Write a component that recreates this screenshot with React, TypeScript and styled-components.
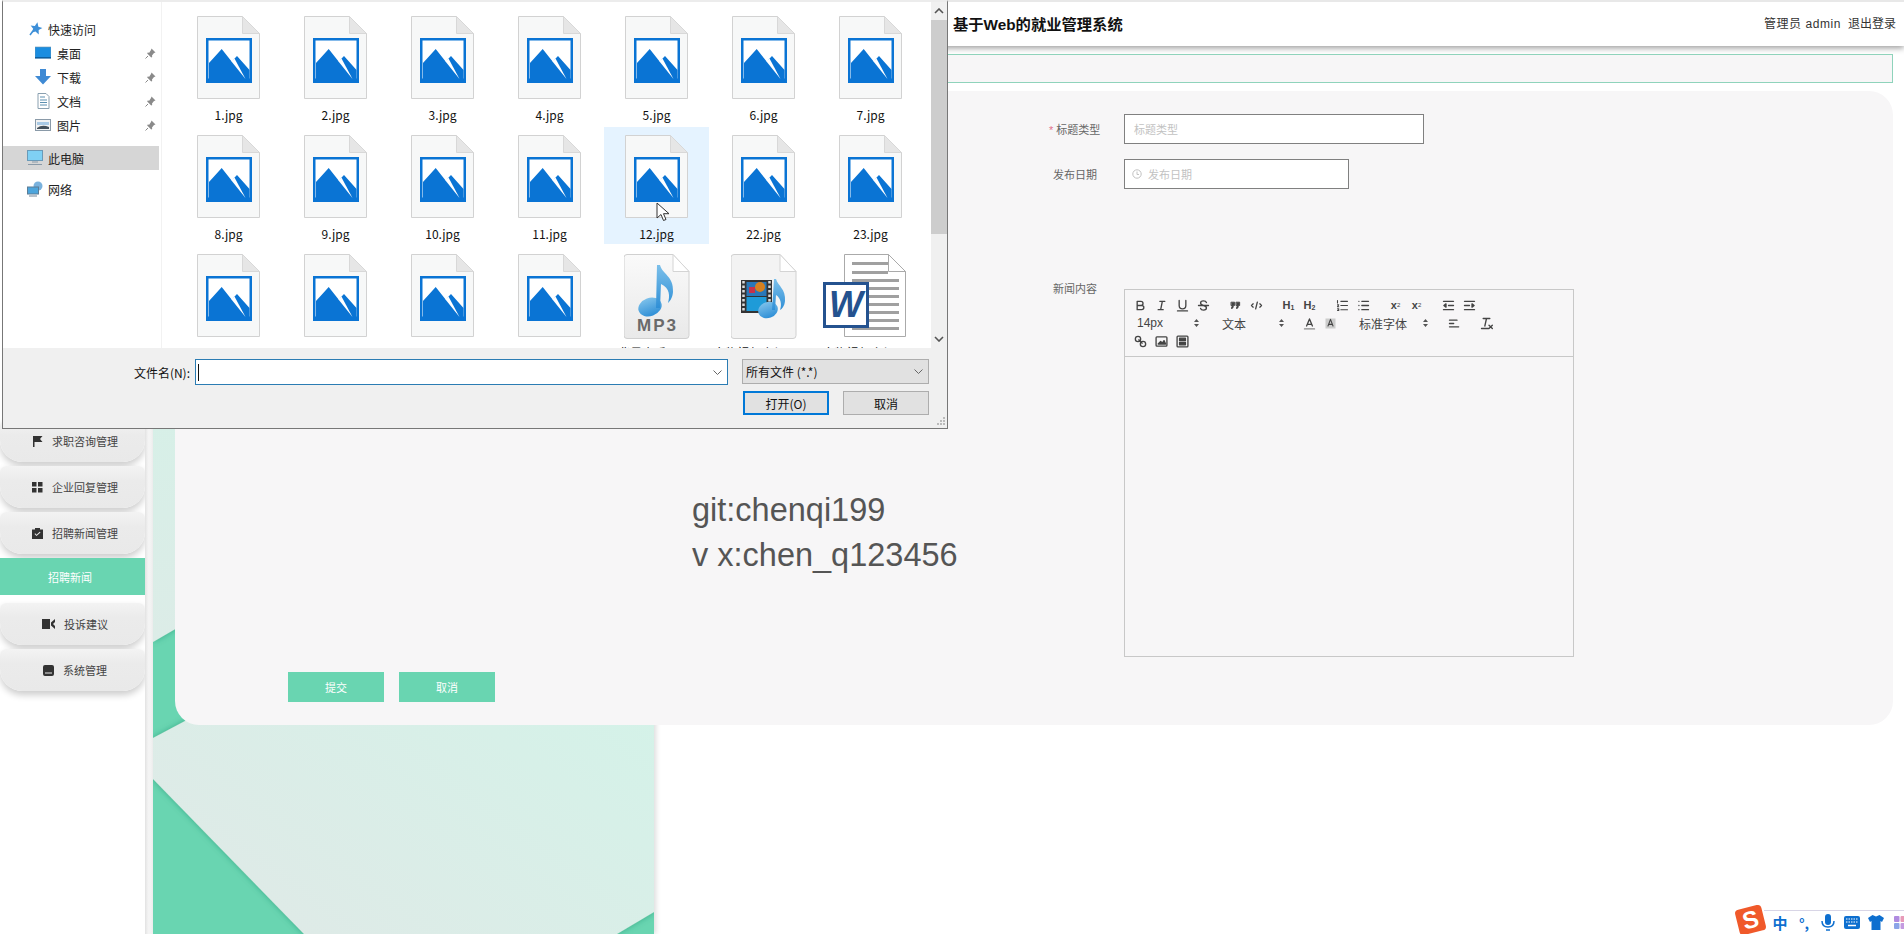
import React from "react";
import styled, { createGlobalStyle } from "styled-components";

const Global = createGlobalStyle`
  html, body { margin: 0; padding: 0; background: #fff; }
  body { width: 1904px; height: 934px; overflow: hidden; font-family: "Liberation Sans", "Noto Sans CJK SC", sans-serif; color: #333; }
  * { box-sizing: border-box; }
`;

const Page = styled.div`
  position: relative;
  display: flex;
  width: 1904px;
  height: 934px;
  overflow: hidden;
  background: #fff;
`;

/* ---------- sidebar ---------- */
const Sidebar = styled.nav`
  width: 145px;
  flex: none;
  display: flex;
  flex-direction: column;
  padding-top: 420px;
  background: #fff;
`;
const MenuItem = styled.div`
  height: 42px;
  margin-bottom: 4px;
  display: flex;
  align-items: center;
  justify-content: center;
  gap: 9px;
  padding-left: 5px;
  font-size: 11px;
  color: #444;
  background: linear-gradient(#f3f3f3, #ebebeb 35%, #e9e9e9);
  border-radius: 6px 6px 22px 22px;
  box-shadow: 0 4px 7px rgba(0, 0, 0, 0.2);
`;
const SubItem = styled.div`
  height: 37px;
  margin-bottom: 8px;
  display: flex;
  align-items: center;
  justify-content: center;
  padding-right: 5px;
  font-size: 11px;
  color: #fff;
  background: #69d5b1;
`;
const Gutter = styled.div`
  width: 8px;
  flex: none;
  background: linear-gradient(to right, #e2e2e2, #f4f4f4 40%, #f3f3f3);
`;

/* ---------- main ---------- */
const Main = styled.main`
  position: relative;
  flex: 1;
  display: flex;
  flex-direction: column;
  min-width: 0;
`;
const Art = styled.div`
  position: absolute;
  left: 0;
  top: 0;
  width: 501px;
  height: 934px;
  box-shadow: 2px 0 5px rgba(0, 0, 0, 0.14);
`;
const Header = styled.header`
  position: relative;
  height: 46px;
  flex: none;
  display: flex;
  align-items: center;
  justify-content: space-between;
  padding: 0 8px 3px 800px;
  background: #fff;
  border-top: 2px solid #e8e8e8;
  box-shadow: 0 2px 6px rgba(0, 0, 0, 0.4);
`;
const Title = styled.h1`
  margin: 0;
  font-size: 15.3px;
  font-weight: 700;
  color: #111;
  font-family: "Liberation Sans", "Noto Sans CJK SC", sans-serif;
`;
const UserBox = styled.div`
  display: flex;
  gap: 7px;
  font-size: 12px;
  color: #333;
`;
const UserName = styled.span`
  letter-spacing: 0.55px;
`;
const Crumb = styled.div`
  position: relative;
  height: 29px;
  flex: none;
  margin: 8px 11px 0 22px;
  background: #f7f6f7;
  border: 1px solid #8fd3bb;
`;
const Panel = styled.section`
  position: relative;
  height: 634px;
  flex: none;
  margin: 8px 11px 0 22px;
  display: flex;
  background: #f7f6f7;
  border-radius: 24px;
`;
const LeftCol = styled.div`
  width: 874px;
  flex: none;
  padding: 397px 0 0 113px;
`;
const Note = styled.div`
  height: 90px;
  margin-left: 404px;
  font-family: "Liberation Sans", sans-serif;
  font-size: 32.5px;
  line-height: 45px;
  color: #555;
  white-space: nowrap;
`;
const Actions = styled.div`
  display: flex;
  gap: 15px;
  margin-top: 94px;
`;
const Action = styled.button`
  width: 96px;
  height: 30px;
  border: 0;
  padding: 0;
  background: #69d5b1;
  color: #fff;
  font-size: 11px;
  font-family: inherit;
`;
const RightCol = styled.div`
  flex: 1;
  display: flex;
  flex-direction: column;
  padding-top: 23px;
`;
const Field = styled.div<{ $mt?: number }>`
  display: flex;
  align-items: center;
  margin-top: ${(p) => p.$mt ?? 0}px;
`;
const Label = styled.label<{ $indent?: number }>`
  width: 75px;
  flex: none;
  padding-left: ${(p) => p.$indent ?? 0}px;
  font-size: 11px;
  color: #666;
`;
const Star = styled.span`
  color: #e2738a;
  margin-right: 3px;
`;
const Input = styled.div<{ $w: number }>`
  width: ${(p) => p.$w}px;
  height: 30px;
  display: flex;
  align-items: center;
  gap: 6px;
  padding: 0 9px;
  background: #fff;
  border: 1px solid #808080;
  font-size: 11px;
  color: #c2c2c2;
`;
const DateInput = styled(Input)`
  padding-left: 7px;
`;
const EditorRow = styled.div`
  display: flex;
  align-items: flex-start;
  margin-top: 100px;
`;
const EditorLabel = styled(Label)`
  margin-top: -9px;
  line-height: 18px;
`;
const Editor = styled.div`
  width: 450px;
  height: 368px;
  border: 1px solid #c8c8c8;
  background: #f7f6f7;
`;
const Toolbar = styled.div`
  height: 67px;
  padding: 6px 0 0 5px;
  border-bottom: 1px solid #c8c8c8;
  display: flex;
  flex-direction: column;
`;
const ToolRow = styled.div`
  height: 18px;
  display: flex;
  align-items: center;
`;
const Tool = styled.span<{ $gap?: number }>`
  width: 21px;
  height: 18px;
  flex: none;
  display: flex;
  align-items: center;
  justify-content: center;
  margin-right: ${(p) => p.$gap ?? 0}px;
  font-size: 11px;
  font-weight: 700;
  color: #444;
  svg { width: 15px; height: 15px; fill: none; stroke: #444; stroke-width: 1.6; stroke-linecap: round; stroke-linejoin: round; }
  small { font-size: 7px; font-weight: 700; position: relative; top: 2px; }
  sup { font-size: 6px; line-height: 0; font-weight: 400; }
  sub { font-size: 6px; line-height: 0; font-weight: 400; }
`;
const Select = styled.span<{ $w: number; $gap?: number }>`
  width: ${(p) => p.$w}px;
  height: 18px;
  flex: none;
  margin-right: ${(p) => p.$gap ?? 11}px;
  padding: 0 5px 0 7px;
  display: flex;
  align-items: center;
  justify-content: space-between;
  font-size: 12px;
  color: #444;
`;
const Arrows = styled.svg`
  width: 5px;
  height: 8px;
  fill: #555;
`;

/* ---------- file dialog ---------- */
const Dialog = styled.div`
  position: absolute;
  left: 2px;
  top: 0;
  width: 946px;
  height: 429px;
  display: flex;
  flex-direction: column;
  background: #fff;
  border-left: 1px solid #777;
  border-right: 1px solid #777;
  border-bottom: 1px solid #777;
  border-top: 2px solid #ececec;
  font-family: "Noto Sans CJK SC", "Noto Sans", sans-serif;
  color: #111;
  z-index: 10;
`;
const DialogBody = styled.div`
  height: 346px;
  flex: none;
  display: flex;
  overflow: hidden;
`;
const NavPane = styled.div`
  width: 159px;
  flex: none;
  padding-top: 15px;
  border-right: 1px solid #f2f2f2;
`;
const NavItem = styled.div<{ $level?: number; $active?: boolean; $mt?: number }>`
  height: 24px;
  margin: ${(p) => p.$mt ?? 0}px 2px 0 0;
  padding-left: ${(p) => (p.$level ? 32 : 24)}px;
  display: flex;
  align-items: center;
  gap: ${(p) => (p.$level ? 6 : 5)}px;
  font-size: 12px;
  color: #222;
  background: ${(p) => (p.$active ? "#d6d6d6" : "transparent")};
  svg { flex: none; }
`;
const Pin = styled.svg`
  width: 11px;
  height: 11px;
  margin-left: auto;
  margin-right: 3px;
`;
const FileGrid = styled.div`
  flex: 1;
  padding: 6px 0 0 14px;
  display: grid;
  grid-template-columns: repeat(7, 105px);
  grid-auto-rows: 117px;
  gap: 2px;
  align-content: start;
`;
const Tile = styled.div<{ $selected?: boolean }>`
  display: flex;
  flex-direction: column;
  align-items: center;
  padding-top: 8px;
  background: ${(p) => (p.$selected ? "#e5f3ff" : "transparent")};
`;
const TileIcon = styled.div<{ $shift?: number }>`
  height: 84px;
  flex: none;
  display: flex;
  align-items: flex-start;
  justify-content: center;
  margin-right: ${(p) => p.$shift ?? 0}px;
`;
const TileName = styled.div`
  margin-top: 7px;
  font-size: 12px;
  line-height: 16px;
  color: #111;
  white-space: nowrap;
`;
const Scrollbar = styled.div`
  width: 16px;
  flex: none;
  display: flex;
  flex-direction: column;
  align-items: center;
  background: #f0f0f0;
`;
const ScrollBtn = styled.svg<{ $mt?: number }>`
  width: 10px;
  height: 6px;
  flex: none;
  margin-top: ${(p) => p.$mt ?? 0}px;
  fill: none;
  stroke: #555;
  stroke-width: 1.6;
`;
const Thumb = styled.div`
  width: 16px;
  height: 214px;
  flex: none;
  margin-top: 6px;
  background: #cdcdcd;
`;
const DialogFoot = styled.div`
  flex: 1;
  display: grid;
  grid-template-columns: 192px 533px 14px 187px;
  grid-template-rows: 26px 24px;
  row-gap: 6px;
  align-content: start;
  padding-top: 11px;
  background: #f0f0f0;
  font-size: 12px;
`;
const FootLabel = styled.label`
  display: flex;
  align-items: center;
  justify-content: flex-end;
  padding-right: 5px;
  color: #111;
`;
const NameInput = styled.div`
  display: flex;
  align-items: center;
  justify-content: space-between;
  padding: 0 5px 0 2px;
  background: #fff;
  border: 1px solid #2b7cb3;
`;
const Caret = styled.span`
  width: 1px;
  height: 17px;
  background: #111;
`;
const Chevron = styled.svg`
  width: 9px;
  height: 5px;
  fill: none;
  stroke: #666;
  stroke-width: 1;
`;
const TypeSelect = styled.div`
  grid-column: 4;
  display: flex;
  align-items: center;
  justify-content: space-between;
  padding: 0 5px 0 3px;
  height: 25px;
  background: #e1e1e1;
  border: 1px solid #adadad;
`;
const FootButtons = styled.div`
  grid-column: 4;
  display: flex;
  justify-content: space-between;
  padding-left: 1px;
`;
const WinBtn = styled.button<{ $primary?: boolean }>`
  width: 86px;
  height: 24px;
  padding: 0;
  font-family: inherit;
  font-size: 12px;
  color: #111;
  background: #e1e1e1;
  border: ${(p) => (p.$primary ? "2px solid #0078d7" : "1px solid #adadad")};
`;
const Grip = styled.svg`
  position: absolute;
  right: 2px;
  bottom: 2px;
  width: 9px;
  height: 9px;
  fill: #bbb;
`;
const Cursor = styled.svg`
  position: absolute;
  left: 653px;
  top: 200px;
  width: 14px;
  height: 20px;
`;

/* ---------- ime tray ---------- */
const Tray = styled.div`
  position: absolute;
  right: 0;
  bottom: 0;
  width: 140px;
  height: 24px;
  display: grid;
  grid-template-columns: repeat(6, 24px);
  justify-items: center;
  align-items: center;
  padding-left: 4px;
  border-top: 1px solid #d8d5e6;
  background: #fff;
  z-index: 20;
  color: #0e6fcf;
  font-family: "Noto Sans CJK SC", sans-serif;
  font-size: 15px;
  font-weight: 700;
`;
const Sogou = styled.div`
  position: absolute;
  right: 140px;
  bottom: 1px;
  width: 27px;
  height: 26px;
  display: flex;
  align-items: center;
  justify-content: center;
  background: #f0592a;
  border-radius: 4px;
  transform: rotate(-14deg);
  color: #fff;
  font: 700 24px "Liberation Sans", sans-serif;
  z-index: 21;
`;
const Punct = styled.span`
  font-size: 14px;
  line-height: 1;
  white-space: nowrap;
`;

/* ---------- drawings ---------- */
const ImageFile = () => (
  <svg width="64" height="84" viewBox="0 0 64 84">
    <path d="M.5.5h45l17 17v65H.5z" fill="#f7f8f8" stroke="#d2d2d2" />
    <path d="M45.5.5v17h17z" fill="#e6e6e6" stroke="#d8d8d8" />
    <rect x="9" y="22" width="46" height="45" fill="#0a74d4" />
    <rect x="11.5" y="24.5" width="41" height="38" fill="#fff" />
    <path d="M12 47L24.7 33 35 46 37.500 42.500 40 40 52.500 54V64H12z" fill="#0a74d4" />
    <path d="M34.500 45.500L37.500 42.500 48.500 63z" fill="#fff" />
  </svg>
);
const Mp3File = () => (
  <svg width="66" height="86" viewBox="0 0 66 86">
    <defs>
      <linearGradient id="mp3p" x1="0" y1="0" x2="0" y2="1">
        <stop offset="0" stopColor="#fafafa" />
        <stop offset="1" stopColor="#e9e9e9" />
      </linearGradient>
      <linearGradient id="note" x1="0" y1="0" x2="0" y2="1">
        <stop offset="0" stopColor="#7cc0ea" />
        <stop offset="1" stopColor="#2f8fd6" />
      </linearGradient>
    </defs>
    <path d="M3 .5h46l16 17v64q0 3-3 3H3q-3 0-3-3V3.500q0-3 3-3z" fill="url(#mp3p)" stroke="#d0d0d0" />
    <path d="M49 .5v17h16z" fill="#fff" stroke="#d4d4d4" />
    <ellipse cx="26" cy="53" rx="12" ry="9" fill="url(#note)" transform="rotate(-20 26 53)" />
    <path d="M33 11h3c2 9 14 11 13 27-.5 6-3 9-5 11 2-7 2-15-7-19l-1 24h-4z" fill="url(#note)" />
    <text x="33.500" y="77" textAnchor="middle" fontFamily="Liberation Sans" fontWeight="700" fontSize="17" letterSpacing="2" fill="#6a6a6a">MP3</text>
  </svg>
);
const VideoFile = () => (
  <svg width="66" height="86" viewBox="0 0 66 86">
    <defs>
      <linearGradient id="vidn" x1="0" y1="0" x2="0" y2="1">
        <stop offset="0" stopColor="#7cc0ea" />
        <stop offset="1" stopColor="#2f8fd6" />
      </linearGradient>
    </defs>
    <path d="M3 .5h46l16 17v64q0 3-3 3H3q-3 0-3-3V3.500q0-3 3-3z" fill="#f3f3f3" stroke="#d0d0d0" />
    <path d="M49 .5v17h16z" fill="#fff" stroke="#d4d4d4" />
    <rect x="10" y="26" width="31" height="33" fill="#333" />
    <path d="M12.500 27v31M38.500 27v31" stroke="#ddd" strokeWidth="2.500" strokeDasharray="2.500 2" />
    <rect x="15.500" y="28" width="20" height="14" fill="#2a78b8" />
    <rect x="15.500" y="43" width="20" height="14" fill="#1f9bd8" />
    <circle cx="29" cy="33" r="5" fill="#d8811f" />
    <rect x="18" y="33" width="6" height="6" fill="#c8324a" />
    <ellipse cx="37" cy="56" rx="10" ry="8" fill="url(#vidn)" transform="rotate(-20 37 56)" />
    <path d="M43 25h2c2 7 10 10 9 22-.5 5-3 8-5 9 2-5 1-12-4-15l-1 15h-3z" fill="url(#vidn)" />
  </svg>
);
const WordFile = () => (
  <svg width="84" height="84" viewBox="0 0 84 84">
    <path d="M21.500.5h44l17 17v65h-61z" fill="#fff" stroke="#aaa" />
    <path d="M65.500.5v17h17z" fill="#fff" stroke="#aaa" />
    {[8, 17].map((y) => <rect key={y} x="29" y={y} width="36" height="3" fill="#a0a0a0" />)}
    {[25, 33, 41, 49, 57, 65, 73].map((y) => <rect key={y} x="29" y={y} width="47" height="3" fill="#a0a0a0" />)}
    <rect x="1.500" y="29.500" width="43" height="43" fill="#fff" stroke="#24528f" strokeWidth="3" />
    <text x="23" y="63" textAnchor="middle" fontFamily="Liberation Sans" fontStyle="italic" fontWeight="700" fontSize="36" fill="#24528f">W</text>
  </svg>
);

const Svg16 = ({ children }: { children: React.ReactNode }) => (
  <svg width="16" height="16" viewBox="0 0 16 16">{children}</svg>
);
const QuickIcon = () => (
  <Svg16><path d="M9 1l1.800 4 4.200.4-3.200 2.800 1 4.300L9 10.300 5.200 12.500l1-4.300L3 5.400l4.200-.4z" fill="#3d8fd8" transform="rotate(12 8 8)" /><path d="M3 14l3-4" stroke="#3d8fd8" strokeWidth="1.500" /></Svg16>
);
const DesktopIcon = () => (
  <Svg16><rect x="0" y="2" width="16" height="11" fill="#1a8de0" stroke="#6f95b0" strokeWidth=".6" /><rect x="0" y="12" width="16" height="1.500" fill="#0c5e9f" /></Svg16>
);
const DownIcon = () => (
  <Svg16><path d="M5 0h6v7h5l-8 8.500L0 7h5z" fill="#3f8ad4" /></Svg16>
);
const DocIcon = () => (
  <Svg16><path d="M3 .5h8l3 3v12H3z" fill="#fff" stroke="#8aa0b0" /><path d="M5 4h5M5 7h7M5 9.500h7M5 12h7" stroke="#5c8fb0" /></Svg16>
);
const PicIcon = () => (
  <Svg16><rect x=".5" y="2.500" width="15" height="11" fill="#f2f2f2" stroke="#8a9aa8" /><path d="M2 5h12v3H2z" fill="#a9c9e4" /><path d="M2 11q5-4 12-1v2H2z" fill="#44505a" /></Svg16>
);
const PcIcon = () => (
  <Svg16><rect x=".5" y=".5" width="15" height="10" fill="#7fd0f4" stroke="#6a9ab8" /><path d="M5 12h6M1 14.500h14" stroke="#8a9aa8" strokeWidth="1.200" /></Svg16>
);
const NetIcon = () => (
  <Svg16><circle cx="11" cy="5" r="4.500" fill="#7ab2dd" /><rect x=".5" y="6" width="11" height="7" fill="#4da5dc" stroke="#5c7d96" /><path d="M2 15h8" stroke="#8a9aa8" strokeWidth="1.200" /></Svg16>
);
const PinIcon = () => (
  <Pin viewBox="0 0 11 11"><path d="M6.500 0.500l4 4-1.500.5-2 2.500.2 1.500-1 .5-4-4 .5-1 1.500.2L6 2z" fill="#8a8a8a" /><path d="M3 8L.5 10.500" stroke="#8a8a8a" /></Pin>
);

const IconSvg = styled.svg<{ $w?: number; $h?: number }>`
  width: ${(p) => p.$w ?? 11}px;
  height: ${(p) => p.$h ?? 11}px;
  flex: none;
  fill: #333;
`;
const FlagIcon = () => <IconSvg viewBox="0 0 11 11"><path d="M1 0h9.500L8 3l2.500 3H2.500v5H1z" /></IconSvg>;
const GridIcon = () => <IconSvg viewBox="0 0 11 11"><path d="M0 0h4.500v4.500H0zM6 0h4.500v4.500H6zM0 6h4.500v4.500H0zM6 6h4.500v4.500H6z" /></IconSvg>;
const ClipIcon = () => <IconSvg viewBox="0 0 11 11"><path fillRule="evenodd" d="M0 1.500h3V0h5v1.500h3V11H0zM2.500 6l2 2L8.500 4.500l-.7-.7L4.500 6.800 3.200 5.300z" /></IconSvg>;
const CamIcon = () => <IconSvg $w={13} $h={10} viewBox="0 0 13 10"><path d="M0 0h8v10H0zM9 3.500L13 0v3l-2 2 2 2v3L9 6.500z" /></IconSvg>;
const BoxIcon = () => <IconSvg viewBox="0 0 11 11"><path fillRule="evenodd" d="M2 0h7q2 0 2 2v7q0 2-2 2H2q-2 0-2-2V2q0-2 2-2zM2 7.500v1h7v-1z" /></IconSvg>;

const ClockIcon = () => (
  <svg width="10" height="10" viewBox="0 0 10 10" fill="none" stroke="#c2c2c2"><circle cx="5" cy="5" r="4.200" /><path d="M5 2.500V5.500h2" /></svg>
);
const UpDown = () => <Arrows viewBox="0 0 5 8"><path d="M2.500 0L5 3H0zM2.500 8L0 5h5z" /></Arrows>;

const files: { name: string; kind?: "mp3" | "video" | "word"; selected?: boolean }[] = [
  { name: "1.jpg" }, { name: "2.jpg" }, { name: "3.jpg" }, { name: "4.jpg" }, { name: "5.jpg" }, { name: "6.jpg" }, { name: "7.jpg" },
  { name: "8.jpg" }, { name: "9.jpg" }, { name: "10.jpg" }, { name: "11.jpg" }, { name: "12.jpg", selected: true }, { name: "22.jpg" }, { name: "23.jpg" },
  { name: "24.jpg" }, { name: "25.jpg" }, { name: "26.jpg" }, { name: "27.jpg" },
  { name: "背景音乐.mp3", kind: "mp3" }, { name: "人物视频介绍.mp4", kind: "video" }, { name: "人物视频介绍.doc", kind: "word" },
];

const App = () => (
  <Page>
    <Global />
    <Sidebar>
      <MenuItem><FlagIcon />求职咨询管理</MenuItem>
      <MenuItem><GridIcon />企业回复管理</MenuItem>
      <MenuItem><ClipIcon />招聘新闻管理</MenuItem>
      <SubItem>招聘新闻</SubItem>
      <MenuItem><CamIcon />投诉建议</MenuItem>
      <MenuItem><BoxIcon />系统管理</MenuItem>
    </Sidebar>
    <Gutter />
    <Main>
      <Art>
        <svg width="501" height="934" viewBox="0 0 501 934">
          <defs>
            <linearGradient id="up" x1="0" y1="0" x2="0" y2="1">
              <stop offset="0" stopColor="#cdf6e8" />
              <stop offset="1" stopColor="#dcece7" />
            </linearGradient>
            <linearGradient id="low" x1="1" y1="0" x2="0.2" y2="1">
              <stop offset="0" stopColor="#cff6e9" />
              <stop offset="1" stopColor="#dfeae7" />
            </linearGradient>
            <filter id="sh" x="-5%" y="-5%" width="110%" height="110%">
              <feDropShadow dx="0" dy="0" stdDeviation="3" floodColor="#1c7a5c" floodOpacity=".45" />
            </filter>
          </defs>
          <rect width="501" height="934" fill="#69d5b1" />
          <path d="M0 0H501V350L0 642z" fill="url(#up)" filter="url(#sh)" />
          <path d="M0 738L501 472V912L464 934H151L0 779z" fill="url(#low)" filter="url(#sh)" />
        </svg>
      </Art>
      <Header>
        <Title>基于Web的就业管理系统</Title>
        <UserBox><UserName>管理员 admin</UserName><span>退出登录</span></UserBox>
      </Header>
      <Crumb />
      <Panel>
        <LeftCol>
          <Note>git:chenqi199<br />v x:chen_q123456</Note>
          <Actions>
            <Action>提交</Action>
            <Action>取消</Action>
          </Actions>
        </LeftCol>
        <RightCol>
          <Field>
            <Label><Star>*</Star>标题类型</Label>
            <Input $w={300}>标题类型</Input>
          </Field>
          <Field $mt={15}>
            <Label $indent={4}>发布日期</Label>
            <DateInput $w={225}><ClockIcon />发布日期</DateInput>
          </Field>
          <EditorRow>
            <EditorLabel $indent={4}>新闻内容</EditorLabel>
            <Editor>
              <Toolbar>
                <ToolRow>
                  <Tool><svg viewBox="0 0 18 18"><path d="M5 4h4.500a2.500 2.500 0 0 1 0 5H5zM5 9h5.500a2.500 2.500 0 0 1 0 5H5z" /></svg></Tool>
                  <Tool><svg viewBox="0 0 18 18"><path d="M7 4h6M5 14h6M8 14l2-10" /></svg></Tool>
                  <Tool><svg viewBox="0 0 18 18"><path d="M5 3v6a4 4 0 0 0 8 0V3M3 15.500h12" /></svg></Tool>
                  <Tool $gap={11}><svg viewBox="0 0 18 18"><path d="M3 9h12M12.500 5.500C12 4 10.500 3.500 9 3.500 7 3.500 5.500 4.500 5.500 6S7 8.500 9 9c2.500.5 3.500 1.500 3.500 3S11 14.500 9 14.500c-1.500 0-3-.5-3.500-2" /></svg></Tool>
                  <Tool><svg viewBox="0 0 18 18" style={{ strokeWidth: 1 }}><path d="M4 5h4v4H6.500Q6.500 12 4.500 13L4 12q1-1 1-3H4zM10 5h4v4h-1.500q0 3-2 4L10 12q1-1 1-3h-1z" fill="#444" /></svg></Tool>
                  <Tool $gap={11}><svg viewBox="0 0 18 18"><path d="M5 7L3 9l2 2M13 7l2 2-2 2M10 5L8 13" /></svg></Tool>
                  <Tool>H<small>1</small></Tool>
                  <Tool $gap={12}>H<small>2</small></Tool>
                  <Tool><svg viewBox="0 0 18 18"><path d="M7 4h8M7 9h8M7 14h8M3 3v3M3 8h1.500L3 10.500h1.500M3 13h1.500v2H3" style={{ strokeWidth: 1.300 }} /></svg></Tool>
                  <Tool $gap={11}><svg viewBox="0 0 18 18"><path d="M7 4h8M7 9h8M7 14h8M3.500 4h.01M3.500 9h.01M3.500 14h.01" /></svg></Tool>
                  <Tool>x<sub>2</sub></Tool>
                  <Tool $gap={11}>x<sup>2</sup></Tool>
                  <Tool><svg viewBox="0 0 18 18"><path d="M3 4h12M9 9h6M3 14h12M6 7L3.500 9 6 11z" fill="#444" /></svg></Tool>
                  <Tool><svg viewBox="0 0 18 18"><path d="M3 4h12M3 9h6M3 14h12M12 7l2.500 2L12 11z" fill="#444" /></svg></Tool>
                </ToolRow>
                <ToolRow>
                  <Select $w={74}>14px<UpDown /></Select>
                  <Select $w={74} $gap={10}>文本<UpDown /></Select>
                  <Tool><svg viewBox="0 0 18 18"><path d="M5.500 12L9 3.500l3.500 8.500M6.500 10h5" /><path d="M3 15.500h12" stroke="#888" /></svg></Tool>
                  <Tool $gap={11}><svg viewBox="0 0 18 18"><rect x="3" y="3" width="12" height="12" fill="#ccc" stroke="none" /><path d="M6 12l3-8 3 8M7 10h4" style={{ strokeWidth: 1.300 }} /></svg></Tool>
                  <Select $w={81}>标准字体<UpDown /></Select>
                  <Tool $gap={11}><svg viewBox="0 0 18 18"><path d="M3 5h9M3 9h5M3 13h11" /></svg></Tool>
                  <Tool><svg viewBox="0 0 18 18"><path d="M5 3h8M9 3L7 12M3 15h9M12 11l4 4M16 11l-4 4" /></svg></Tool>
                </ToolRow>
                <ToolRow>
                  <Tool><svg viewBox="0 0 18 18"><path d="M7 7L11 11" /><circle cx="6" cy="6" r="3.200" /><circle cx="12" cy="12" r="3.200" /></svg></Tool>
                  <Tool><svg viewBox="0 0 18 18"><rect x="2.500" y="3.500" width="13" height="11" rx="1" /><path d="M5 12l3-3 2 2 2-3 2 4z" fill="#444" /></svg></Tool>
                  <Tool><svg viewBox="0 0 18 18"><rect x="2.500" y="2.500" width="13" height="13" rx="1" /><rect x="5.500" y="5" width="7" height="3" fill="#444" /><rect x="5.500" y="10" width="7" height="3" fill="#444" /></svg></Tool>
                </ToolRow>
              </Toolbar>
            </Editor>
          </EditorRow>
        </RightCol>
      </Panel>
    </Main>

    <Dialog>
      <DialogBody>
        <NavPane>
          <NavItem><QuickIcon />快速访问</NavItem>
          <NavItem $level={1}><DesktopIcon />桌面<PinIcon /></NavItem>
          <NavItem $level={1}><DownIcon />下载<PinIcon /></NavItem>
          <NavItem $level={1}><DocIcon />文档<PinIcon /></NavItem>
          <NavItem $level={1}><PicIcon />图片<PinIcon /></NavItem>
          <NavItem $active $mt={9}><PcIcon />此电脑</NavItem>
          <NavItem $mt={7}><NetIcon />网络</NavItem>
        </NavPane>
        <FileGrid>
          {files.map((f) => (
            <Tile key={f.name} $selected={f.selected}>
              <TileIcon $shift={f.kind === "word" ? 12 : 0}>
                {f.kind === "mp3" ? <Mp3File /> : f.kind === "video" ? <VideoFile /> : f.kind === "word" ? <WordFile /> : <ImageFile />}
              </TileIcon>
              <TileName>{f.name}</TileName>
            </Tile>
          ))}
        </FileGrid>
        <Scrollbar>
          <ScrollBtn viewBox="0 0 10 6" $mt={6}><path d="M1 5l4-4 4 4" /></ScrollBtn>
          <Thumb />
          <ScrollBtn viewBox="0 0 10 6" $mt={102}><path d="M1 1l4 4 4-4" /></ScrollBtn>
        </Scrollbar>
      </DialogBody>
      <DialogFoot>
        <FootLabel>文件名(N):</FootLabel>
        <NameInput><Caret /><Chevron viewBox="0 0 9 5"><path d="M.5.500L4.500 4.500 8.500.5" /></Chevron></NameInput>
        <TypeSelect>所有文件 (*.*)<Chevron viewBox="0 0 9 5"><path d="M.5.500L4.500 4.500 8.500.5" /></Chevron></TypeSelect>
        <FootButtons>
          <WinBtn $primary>打开(O)</WinBtn>
          <WinBtn>取消</WinBtn>
        </FootButtons>
      </DialogFoot>
      <Grip viewBox="0 0 9 9"><path d="M7 0h2v2H7zM4 3h2v2H4zM7 3h2v2H7zM1 6h2v2H1zM4 6h2v2H4zM7 6h2v2H7z" /></Grip>
      <Cursor viewBox="0 0 14 20"><path d="M1 1v15l4-3.500 2.500 6 2.500-1-2.500-5.800H13z" fill="#fff" stroke="#333" /></Cursor>
    </Dialog>

    <Sogou>S</Sogou>
    <Tray>
      <span>中</span>
      <Punct>°,</Punct>
      <svg width="14" height="18" viewBox="0 0 14 18" fill="#0e6fcf"><rect x="4" y="0" width="6" height="11" rx="3" /><path d="M1 7q0 6 6 6t6-6" fill="none" stroke="#0e6fcf" strokeWidth="1.500" /><path d="M5 16h4" stroke="#0e6fcf" strokeWidth="1.500" /></svg>
      <svg width="16" height="13" viewBox="0 0 16 13"><rect width="16" height="13" rx="2" fill="#0e6fcf" /><path d="M2 3h12M2 6h12" stroke="#fff" strokeDasharray="1.500 1" /><path d="M4 9.500h8" stroke="#fff" strokeWidth="1.500" /></svg>
      <svg width="16" height="15" viewBox="0 0 16 15"><path d="M4.500 0L8 1.500 11.500 0 16 3l-2 4-1.500-1v9h-9V6L2 7 0 3z" fill="#0e6fcf" /></svg>
      <svg width="12" height="14" viewBox="0 0 12 14"><rect width="5.500" height="6" rx="1" fill="#b08be0" /><rect x="6.500" width="5.500" height="6" rx="1" fill="#e89ab8" /><rect y="7" width="5.500" height="6" rx="1" fill="#8ba4e8" /><rect x="6.500" y="7" width="5.500" height="6" rx="1" fill="#c49be0" /></svg>
    </Tray>
  </Page>
);

export default App;
